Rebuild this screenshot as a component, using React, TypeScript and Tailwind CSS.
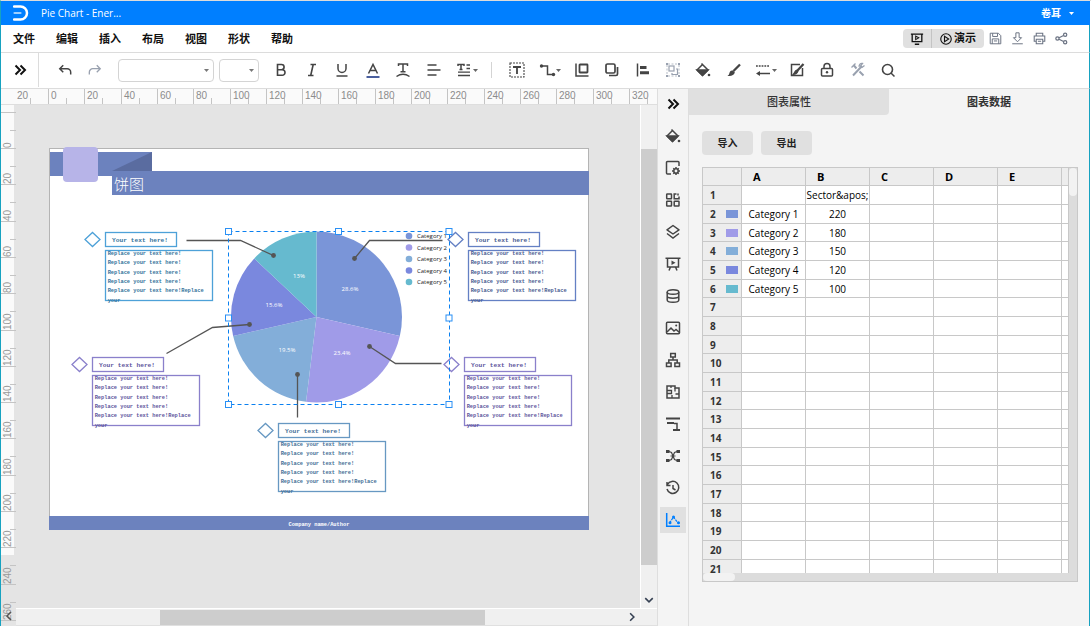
import React, { useState } from 'react';
import clsx from 'clsx';

const MENUS = ['文件', '编辑', '插入', '布局', '视图', '形状', '帮助'];

const DATA = [
  { name: 'Category 1', value: 220, color: '#7a95d8', label: '28.6%', lx: 350, ly: 291 },
  { name: 'Category 2', value: 180, color: '#a09be8', label: '23.4%', lx: 342, ly: 355 },
  { name: 'Category 3', value: 150, color: '#83aed9', label: '19.5%', lx: 287, ly: 352 },
  { name: 'Category 4', value: 120, color: '#7a88de', label: '15.6%', lx: 274, ly: 307 },
  { name: 'Category 5', value: 100, color: '#66bacf', label: '13%', lx: 299, ly: 278 },
];

const CALLOUTS = [
  { x: 105, y: 232, color: '#4da1d8', text: '#34739b' },
  { x: 468, y: 232, color: '#6480c4', text: '#485b90' },
  { x: 92, y: 357, color: '#8a80cb', text: '#5d559c' },
  { x: 464, y: 357, color: '#8a80cb', text: '#5d559c' },
  { x: 278, y: 423, color: '#6798c2', text: '#456f96' },
];

const CONNECTORS = [
  { points: '186,240 240,240 273,255', dot: [273, 255] },
  { points: '442,240 369,240 354,258', dot: [354, 258] },
  { points: '166,353 212,327 249,324', dot: [249, 324] },
  { points: '441,363 395,363 369,346', dot: [369, 346] },
  { points: '297,417 297,374', dot: [297, 374] },
];

const BODY_LINES = [
  'Replace your text here!',
  'Replace your text here!',
  'Replace your text here!',
  'Replace your text here!',
  'Replace your text here!Replace',
  'your',
];

type IconProps = { children: React.ReactNode; size?: number; width?: number; className?: string };

function Icon({ children, size = 16, width, className }: IconProps) {
  const w = width ?? size;
  return (
    <svg
      width={w}
      height={size}
      viewBox={`0 0 ${(w * 16) / size} 16`}
      fill="none"
      stroke="currentColor"
      strokeWidth={1.5}
      className={clsx('shrink-0', className)}
      aria-hidden="true"
    >
      {children}
    </svg>
  );
}

const Caret = ({ x, y }: { x: number; y: number }) => (
  <path d={`M${x} ${y}h5l-2.5 3z`} fill="#666" stroke="none" />
);

const DoubleChevron = () => (
  <Icon>
    <path d="M3.5 3.5L8 8l-4.500 4.500M8.500 3.500L13 8l-4.500 4.500" stroke="#111" strokeWidth="2" />
  </Icon>
);

const Bucket = () => (
  <Icon>
    <path d="M6.500 1.500l6.500 6.500-5.500 5.500L2 8l5-5" strokeLinejoin="round" />
    <path d="M2 8h11L7.500 13.500z" fill="currentColor" />
    <circle cx="14" cy="13" r="1.300" fill="currentColor" stroke="none" />
  </Icon>
);

type Tool = { name: string; icon: React.ReactNode; className: string };

const FORMAT_TOOLS: Tool[] = [
  { name: 'Bold', className: 'w-[30px]', icon: <Icon><path d="M4.500 2.500h4a2.500 2.500 0 010 5.200h-4zM4.500 7.700h4.700a2.800 2.800 0 010 5.600H4.500z" strokeWidth="1.600" /></Icon> },
  { name: 'Italic', className: 'w-[31px]', icon: <Icon><path d="M6.500 2.500h5.500M4 13.500h5.500M9.200 2.500l-2.500 11" strokeWidth="1.600" /></Icon> },
  { name: 'Underline', className: 'w-[30px]', icon: <Icon><path d="M4 2v4.500a4 4 0 008 0V2M2.500 14h11" /></Icon> },
  { name: 'Font color', className: 'w-[31px]', icon: <Icon><path d="M3.500 11.500l4.500-9 4.500 9M5 8.500h6" /><path d="M1.500 15h13" stroke="#4a5f9e" strokeWidth="2" /></Icon> },
  { name: 'Curved text', className: 'w-[30px]', icon: <Icon><path d="M3.500 4V2h9v2M8 2v8M5.500 9.700h5M1.500 14.500q6.500-4.500 13 0" /></Icon> },
  { name: 'Align', className: 'w-[31px]', icon: <Icon><path d="M1.500 3h9M1.500 8h13M1.500 13h9" /></Icon> },
  { name: 'Paragraph', className: 'w-9', icon: <Icon width={22}><path d="M2 4V2.500h6V4M5 2.500v5M3.500 7.500h3" /><path d="M10.500 3h3.500M10.500 6.500h3.500M2 10.200h12M2 13.500h12" strokeWidth="1.300" /><Caret x={17} y={7} /></Icon> },
];

const ARRANGE_TOOLS: Tool[] = [
  { name: 'Text box', className: 'w-[30px]', icon: <Icon><rect x="1" y="1" width="14" height="14" strokeDasharray="2 1" strokeWidth="1.100" /><path d="M4 5h8M8 5v7" strokeWidth="1.800" /></Icon> },
  { name: 'Connector', className: 'w-[35px]', icon: <Icon width={22}><path d="M3 4h5.500v8.500H15" /><circle cx="2.500" cy="4" r="1.700" fill="currentColor" stroke="none" /><circle cx="14.500" cy="12.500" r="1.700" fill="currentColor" stroke="none" /><Caret x={17} y={7} /></Icon> },
  { name: 'Align shapes', className: 'w-[30px]', icon: <Icon><path d="M2 1.500V14h12.500" /><rect x="5.500" y="2.500" width="8" height="8" rx=".5" strokeWidth="1.800" /></Icon> },
  { name: 'Bring to front', className: 'w-[30px]', icon: <Icon><rect x="2" y="2" width="9" height="9" rx="1.500" strokeWidth="1.700" /><path d="M5 13.500h7a1.500 1.500 0 001.500-1.500V5" strokeWidth="1.700" /></Icon> },
  { name: 'Distribute', className: 'w-[31px]', icon: <Icon><path d="M2.500 1.500v13" /><path d="M5 5.500h6.500M5 10.800h9" strokeWidth="3" /></Icon> },
  { name: 'Group', className: 'w-[30px] text-gray-400', icon: <Icon><path d="M3 2h10M3 14h10M2 3v10M14 3v10" strokeDasharray="2 1.500" strokeWidth=".7" /><rect x="4" y="4" width="5" height="5" strokeWidth="1.200" /><path d="M11 7h1.500v5.500H7V11" strokeWidth="1.200" /><path d="M1 2h2M13 2h2M1 14h2M13 14h2" strokeWidth="2" /></Icon> },
  { name: 'Fill', className: 'w-[30px]', icon: <Bucket /> },
  { name: 'Brush', className: 'w-[31px]', icon: <Icon><path d="M14 2.500L7.500 9" strokeWidth="2.300" /><path d="M7 8.500c-2.500-.5-3.500 1.500-3.800 3.300-.2 1-.9 1.700-1.900 2 3 .9 7-.2 7.500-3.500z" fill="currentColor" stroke="none" /></Icon> },
  { name: 'Line style', className: 'w-[33px]', icon: <Icon width={22}><path d="M1 4h14" strokeDasharray="1.800 1" /><path d="M3 11.500h12" /><path d="M1 11.500l4-2.500v5z" fill="currentColor" stroke="none" /><Caret x={17} y={7} /></Icon> },
  { name: 'Edit style', className: 'w-[30px]', icon: <Icon><path d="M11 2.500H2.500v11h11V6" /><path d="M14.500 2L8 9" strokeWidth="2.300" /><path d="M8.500 7.500c-3 0-3 3-5.500 5.500 3 .5 6-1 6.500-4z" fill="currentColor" stroke="none" /></Icon> },
  { name: 'Lock', className: 'w-[30px]', icon: <Icon><rect x="2.500" y="6.500" width="11" height="7.500" rx="1" /><path d="M5 6.500V4.500a3 3 0 016 0v2" /><circle cx="8" cy="10.300" r="1.200" fill="currentColor" stroke="none" /></Icon> },
  { name: 'Tools', className: 'w-[31px] text-gray-400', icon: <Icon><path d="M3 13.500L12 4M6.500 6.500l-3-3.500M9.500 9.500l4 4" strokeWidth="2" /><path d="M1.500 5.500l4-4M14.500 3.500l-2.500 2-1.500-1.500 2-2.500c-2-.5-3.800 1-3.300 3.300" strokeWidth="1.300" /></Icon> },
  { name: 'Search', className: 'w-[30px]', icon: <Icon><circle cx="7.500" cy="7.500" r="5" strokeWidth="1.600" /><path d="M11 11l3.500 3.500" /></Icon> },
];

const RAIL: { name: string; icon: React.ReactNode }[] = [
  { name: 'Collapse', icon: <DoubleChevron /> },
  { name: 'Fill', icon: <Bucket /> },
  { name: 'Page settings', icon: <Icon><path d="M14 6V2.500a1 1 0 00-1-1H2.500a1 1 0 00-1 1V13a1 1 0 001 1H6" /><circle cx="11" cy="11" r="2.200" /><path d="M11 7v1.500M11 13.500V15M7 11h1.500M13.500 11H15M8.300 8.300l1 1M12.700 12.700l1 1M13.700 8.300l-1 1M9.300 12.700l-1 1" /></Icon> },
  { name: 'Symbols', icon: <Icon><rect x="1.700" y="2" width="4.800" height="4.800" rx=".5" /><rect x="1.700" y="9.200" width="4.800" height="4.800" rx=".5" /><rect x="9.200" y="9.200" width="4.800" height="4.800" rx=".5" /><path d="M11.500 2H9.200v4.800H14V4.500M13 1.500v2" /></Icon> },
  { name: 'Layers', icon: <Icon><path d="M8 1.500l6 4.300-6 4.200-6-4.200z" strokeLinejoin="round" /><path d="M2 9.500l6 4.500 6-4.500" /></Icon> },
  { name: 'Slides', icon: <Icon><path d="M.5 2.200h15M2.500 2.200V11h11V2.200M5.500 11L4 14.500M10.500 11l1.500 3.500" /><path d="M6.500 4.500l4 2.200-4 2.200z" fill="currentColor" stroke="none" /></Icon> },
  { name: 'Data', icon: <Icon><ellipse cx="8" cy="4" rx="5.800" ry="2.300" /><path d="M2.200 4v8c0 1.300 2.600 2.300 5.800 2.300s5.800-1 5.800-2.300V4M2.200 8c0 1.200 2.600 2.200 5.800 2.200s5.800-1 5.800-2.200" /></Icon> },
  { name: 'Pictures', icon: <Icon><rect x="1.500" y="2.200" width="13" height="11.600" rx="1" /><path d="M2 12l4-4 3 3 2-1.500 3.500 3" /><circle cx="11.200" cy="5.500" r="1" fill="currentColor" stroke="none" /></Icon> },
  { name: 'Org chart', icon: <Icon><rect x="5.700" y="1.500" width="4.600" height="3.500" /><rect x="1.500" y="11" width="4.600" height="3.500" /><rect x="9.900" y="11" width="4.600" height="3.500" /><path d="M8 5v3M3.800 11V8h8.400v3" /></Icon> },
  { name: 'Floor plan', icon: <Icon><path d="M2 2h8v2h4v10H2z" /><path d="M6 2v2M2 6.500h4.500v3H2M10 4v3.500M7 14v-3M14 10h-3.500" strokeWidth="1.300" /></Icon> },
  { name: 'Timeline', icon: <Icon><path d="M1 2.500h14M2 7h7M8 14h7" strokeWidth="2.200" /><path d="M9 7.500h3V14" /></Icon> },
  { name: 'Mind map', icon: <Icon><path d="M4 3.500l2.500 1 3 7 2.500 1M12 3.500l-2.500 1-3 7-2.500 1M5.500 8h5" strokeWidth="1.200" /><path d="M1 3.500h3.500M11.500 3.500H15M1 12.500h3.500M11.500 12.500H15" strokeWidth="2.800" /></Icon> },
  { name: 'History', icon: <Icon><path d="M2.500 4.500A6 6 0 112 9M2 2v3.500h3.500M8 5v3.500l2.500 1.500" /></Icon> },
  { name: 'Chart', icon: <Icon><path d="M1.700 1v13.300H15" /><path d="M4.500 11L8.500 5l4.500 6" strokeWidth="1.200" strokeDasharray="2.500 1" /><path d="M8.500 5h.01M5 10.700h.01M13.500 10.700h.01" strokeWidth="3" strokeLinecap="round" /></Icon> },
];

function ToolButton({ tool }: { tool: Tool }) {
  return (
    <button aria-label={tool.name} className={clsx('flex h-6 shrink-0 items-center justify-center', tool.className)}>
      {tool.icon}
    </button>
  );
}

// 20mm is a little over 36 pixels at the current zoom
const tickAt = (origin: number, i: number) => Math.round(origin + i * 36.3);

function HorizontalRuler() {
  return (
    <svg width="655" height="16" viewBox="1 0 655 16" className="block" fontFamily="Liberation Sans, sans-serif" fontSize="10" fill="#8c8c8c">
      {Array.from({ length: 18 }, (_, i) => {
        const x = tickAt(49, i - 1);
        return (
          <g key={i}>
            {i > 0 && <path d={`M${x - 0.5} 0v15`} stroke="#c4c4c4" />}
            <path d={`M${x + 17.5} 9v6`} stroke="#c4c4c4" />
            <text x={i === 0 ? 17 : x + 2} y="10">{Math.abs(i - 1) * 20}</text>
          </g>
        );
      })}
    </svg>
  );
}

function VerticalRuler() {
  return (
    <svg width="15" height="520" viewBox="1 105 15 520" className="block" fontFamily="Liberation Sans, sans-serif" fontSize="10" fill="#999">
      <rect x="1" y="105" width="13" height="450" fill="#fafafa" />
      {Array.from({ length: 15 }, (_, i) => {
        const y = tickAt(148, i - 1);
        return (
          <g key={i}>
            <path d={`M1 ${y + 0.5}h15M10 ${y + 18.5}h6`} stroke="#c4c4c4" />
            {i > 0 && (
              <text transform={`translate(11 ${y}) rotate(-90)`}>{(i - 1) * 20}</text>
            )}
          </g>
        );
      })}
      <path d="M11 612l-4 4 4 4" fill="none" stroke="#555" strokeWidth="1.500" />
    </svg>
  );
}

function Pie({ cx, cy, r }: { cx: number; cy: number; r: number }) {
  const total = DATA.reduce((sum, d) => sum + d.value, 0);
  const point = (v: number) => {
    const a = (v / total) * Math.PI * 2;
    return `${cx + r * Math.sin(a)} ${cy - r * Math.cos(a)}`;
  };
  let start = 0;
  return (
    <g>
      {DATA.map((d) => {
        const from = start;
        start += d.value;
        return <path key={d.name} d={`M${cx} ${cy}L${point(from)}A${r} ${r} 0 0 1 ${point(start)}Z`} fill={d.color} />;
      })}
    </g>
  );
}

function Callout({ x, y, color, text }: { x: number; y: number; color: string; text: string }) {
  return (
    <g>
      <g fill="none" stroke={color} strokeWidth="1.300">
        <path d={`M${x - 20} ${y + 7.5}l7.500-7 7.500 7-7.500 7z`} />
        <rect x={x + 0.5} y={y + 0.5} width="71" height="14" />
        <rect x={x + 0.5} y={y + 18.5} width="107" height="50" />
      </g>
      <svg x={x} y={y} width="128" height="72" viewBox="0 0 144 81" overflow="visible" fontFamily="Liberation Mono, monospace" fontWeight="bold" fill={text}>
        <text x="8" y="11" fontSize="7">Your text here!</text>
        <g fontSize="6">
          {BODY_LINES.map((line, i) => (
            <text key={i} x="3" y={26 + i * 10.5}>{line}</text>
          ))}
        </g>
      </svg>
    </g>
  );
}

function Drawing() {
  return (
    <svg width="624" height="503" viewBox="16 105 624 503" className="block shrink-0">
      <rect x="49.500" y="148.500" width="539" height="381" fill="#fff" stroke="#b4b4b4" />
      <rect x="50" y="152" width="102" height="24" fill="#6c82be" />
      <path d="M112 171l40-19v19z" fill="#5a6ca0" />
      <rect x="112" y="171" width="477" height="24" fill="#6c82be" />
      <rect x="63" y="147" width="35" height="35" rx="4" fill="#b7b4e8" />
      <text x="114" y="190" fontSize="15" fill="#fff" fontFamily="Noto Sans CJK SC, sans-serif" fontWeight="300">饼图</text>
      <rect x="49" y="516" width="540" height="14" fill="#6c82be" />
      <svg x="279" y="516" width="80" height="16" viewBox="0 0 90 18" fontFamily="Liberation Mono, monospace" fontWeight="bold" fontSize="6" fill="#fff">
        <text x="45" y="11" textAnchor="middle">Company name/Author</text>
      </svg>

      <Pie cx={316.5} cy={317} r={85.5} />
      <g fontFamily="Open Sans, Noto Sans, sans-serif" fontSize="6">
        {DATA.map((d, i) => (
          <g key={d.name}>
            <text x={d.lx} y={d.ly} textAnchor="middle" fill="#fff">{d.label}</text>
            <circle cx="409" cy={236 + i * 11.5} r="3.300" fill={d.color} />
            <text x="417" y={238 + i * 11.5} fill="#222">{d.name}</text>
          </g>
        ))}
      </g>
      {CONNECTORS.map((c) => (
        <g key={c.points} transform="translate(.5 .5)">
          <polyline points={c.points} fill="none" stroke="#555" strokeWidth="1.300" />
          <circle cx={c.dot[0]} cy={c.dot[1]} r="2.400" fill="#555" />
        </g>
      ))}
      {CALLOUTS.map((c) => (
        <Callout key={`${c.x}-${c.y}`} {...c} />
      ))}

      {/* selection frame */}
      <rect x="228.500" y="231.500" width="221" height="173" fill="none" stroke="#0a80f0" strokeDasharray="4 3" />
      {[228.5, 338.5, 449].map((x) =>
        [231.5, 318, 404.5].map((y) =>
          x === 338.5 && y === 318 ? null : (
            <rect key={`${x}-${y}`} x={x - 3} y={y - 3} width="6" height="6" fill="#fff" stroke="#2a90f5" />
          )
        )
      )}
    </svg>
  );
}

function Workspace() {
  return (
    <main className="flex min-w-0 flex-1 flex-col overflow-hidden">
      <div className="h-4 shrink-0 overflow-hidden border-b border-[#dedede] bg-[#fafafa]">
        <HorizontalRuler />
      </div>
      <div className="flex min-h-0 flex-1">
        <div className="w-[15px] shrink-0 overflow-hidden bg-[#e4e4e4]">
          <VerticalRuler />
        </div>
        <div className="flex min-w-0 flex-1 flex-col">
          <div className="flex min-h-0 flex-1">
            <div className="min-w-0 flex-1 overflow-hidden bg-[#e4e4e4]">
              <Drawing />
            </div>
            <div className="flex w-[17px] shrink-0 flex-col items-center border-l border-white bg-[#f0f0f0] pt-11">
              <div className="h-[416px] w-full bg-[#cdcdcd]" />
              <Icon size={10} className="mt-[30px] text-gray-700"><path d="M2 5l6 6 6-6" strokeWidth="2.500" /></Icon>
            </div>
          </div>
          <div className="flex h-[18px] shrink-0 items-center justify-between border-y border-b-[#e0e0e0] border-t-white bg-[#f0f0f0] pr-5">
            <div className="ml-36 h-[15px] w-[325px] bg-[#cdcdcd]" />
            <Icon size={10} className="text-gray-700"><path d="M5 2l6 6-6 6" strokeWidth="2.500" /></Icon>
          </div>
        </div>
      </div>
    </main>
  );
}

function DataSheet() {
  return (
    <div className="mt-3 flex w-[376px] border border-[#c8c8c8] bg-[#dcdcdc]">
      <div className="min-w-0 flex-1">
        <div className="h-[405px] overflow-hidden border-r border-[#c8c8c8] bg-white">
          <table className="w-[370px] table-fixed border-separate border-spacing-0 text-[10px] leading-4 text-black">
            <thead>
              <tr className="h-[18px] bg-[#ededed] text-left text-[11px] leading-4">
                <th className="w-[39px] border-b border-r border-[#c8c8c8] p-0" />
                {['A', 'B', 'C', 'D', 'E'].map((c) => (
                  <th key={c} className="w-16 border-b border-r border-[#c8c8c8] p-0 pl-[11px] font-bold">{c}</th>
                ))}
                <th className="border-b border-[#c8c8c8] p-0" />
              </tr>
            </thead>
            <tbody>
              {Array.from({ length: 21 }, (_, i) => {
                const item = i > 0 ? DATA[i - 1] : undefined;
                return (
                  <tr key={i} className={i % 3 === 2 ? 'h-[18px]' : 'h-[19px]'}>
                    <th className="border-b border-r border-[#c8c8c8] bg-[#ededed] p-0 font-bold text-[#333]">
                      <div className="flex items-center justify-between pl-[7px] pr-[3px]">
                        {i + 1}
                        {item && <span className="h-2 w-3" style={{ backgroundColor: item.color }} />}
                      </div>
                    </th>
                    <td className="border-b border-r border-[#c8c8c8] p-0 text-center">{item?.name}</td>
                    <td className="border-b border-r border-[#c8c8c8] p-0 text-center">
                      {i === 0 ? 'Sector&apos;' : item?.value}
                    </td>
                    <td className="border-b border-r border-[#c8c8c8] p-0" />
                    <td className="border-b border-r border-[#c8c8c8] p-0" />
                    <td className="border-b border-r border-[#c8c8c8] p-0" />
                    <td className="border-b border-[#c8c8c8] p-0" />
                  </tr>
                );
              })}
            </tbody>
          </table>
        </div>
        <div className="h-2">
          <div className="h-2 w-8 rounded-full bg-[#f2f2f2]" />
        </div>
      </div>
      <div className="w-2 shrink-0">
        <div className="h-7 w-2 rounded-full bg-[#f2f2f2]" />
      </div>
    </div>
  );
}

export default function App() {
  const [tab, setTab] = useState('图表数据');

  return (
    <div className="flex h-screen flex-col overflow-hidden border-l border-t border-l-[#17a2c0] border-t-[#dcdcdc] bg-white pr-px font-['Open_Sans','Noto_Sans_CJK_SC',sans-serif] text-[#444]">
      <header className="flex h-6 shrink-0 items-center bg-[#007fff] text-[10px] text-white">
        <svg width="16" height="16" viewBox="0 0 16 16" fill="none" className="ml-3 shrink-0" aria-hidden="true">
          <path d="M1 1.500h6.500a6.500 6.500 0 010 13H1" stroke="#fff" strokeWidth="2.500" strokeLinecap="round" />
          <path d="M1.500 8h6" stroke="#9fd0ff" strokeWidth="2.200" strokeLinecap="round" />
        </svg>
        <h1 className="ml-3">Pie Chart - Ener...</h1>
        <button className="ml-auto mr-4 flex items-center gap-2 font-bold">
          卷耳
          <svg width="5" height="3" viewBox="0 0 5 3" aria-hidden="true"><path d="M0 0h5L2.500 3z" fill="#fff" /></svg>
        </button>
      </header>

      <nav className="flex h-7 shrink-0 items-center border-b border-r border-b-[#dcdcdc] border-r-[#17a2c0] pl-3 text-[#111]">
        <div className="flex gap-[21px] pt-0.5 text-[11px] font-bold">
          {MENUS.map((m) => (
            <button key={m}>{m}</button>
          ))}
        </div>
        <div className="ml-auto flex h-[19px] items-center overflow-hidden rounded-sm bg-[#e0e0e0]">
          <button aria-label="Slide show" className="flex h-full w-[29px] items-center justify-center border-r border-[#c4c4c4]">
            <Icon size={14}><path d="M1 2.500h14M2.500 2.500v8.500h11V2.500M5.500 14h5" /><path d="M6.500 4.700v4l3.500-2z" strokeWidth="1.200" /></Icon>
          </button>
          <button className="flex h-full w-[52px] items-center justify-center gap-0.5 text-[11px] font-bold">
            <Icon size={12}><circle cx="8" cy="8" r="7" /><path d="M6 4.500v7L11.500 8z" /></Icon>
            演示
          </button>
        </div>
        <div className="mr-[17px] flex text-gray-500">
          <button aria-label="Save" className="flex w-[22px] justify-center"><Icon size={13}><path d="M1.500 1.500h10l3 3v10h-13zM4.500 1.500v4h6v-4M4 14.500v-6h8v6M6 11h4" strokeWidth="1.200" /></Icon></button>
          <button aria-label="Download" className="flex w-[22px] justify-center"><Icon size={13}><path d="M6 1h4v6h3l-5 5-5-5h3zM1.500 14.500h13" strokeWidth="1.200" /></Icon></button>
          <button aria-label="Print" className="flex w-[22px] justify-center"><Icon size={13}><path d="M4 5V1.500h8V5M4 11.500H1.500V5h13v6.500H12M4 9h8v5.500H4zM6 11.500h4" strokeWidth="1.300" /></Icon></button>
          <button aria-label="Share" className="flex w-[22px] justify-center"><Icon size={13}><circle cx="3" cy="8" r="2" /><circle cx="12.500" cy="3.500" r="2" /><circle cx="12.500" cy="12.500" r="2" /><path d="M5 7l5.500-2.700M5 9l5.500 2.700" /></Icon></button>
        </div>
      </nav>

      <div className="flex h-9 shrink-0 items-center border-b border-r border-b-[#dcdcdc] border-r-[#17a2c0] pb-px">
        <button aria-label="Expand" className="flex w-[38px] items-center justify-center self-stretch border-r border-[#dcdcdc]">
          <DoubleChevron />
        </button>
        <div className="ml-[11px] flex">
          <button aria-label="Undo" className="flex w-[30px] justify-center"><Icon size={14}><path d="M6 2.500L2 6.500l4 4M2.500 6.500h8a4 4 0 014 4V13" strokeWidth="1.700" /></Icon></button>
          <button aria-label="Redo" className="flex w-[30px] justify-center text-gray-400"><Icon size={14}><path d="M10 2.500l4 4-4 4M13.500 6.500h-8a4 4 0 00-4 4V13" strokeWidth="1.500" /></Icon></button>
        </div>
        <button aria-label="Font" className="ml-2 flex h-[23px] w-24 items-center justify-end rounded-sm border border-[#d4d4d4] pr-1">
          <svg width="5" height="3" viewBox="0 0 5 3" aria-hidden="true"><path d="M0 0h5L2.500 3z" fill="#777" /></svg>
        </button>
        <button aria-label="Font size" className="ml-[5px] flex h-[23px] w-10 items-center justify-end rounded-sm border border-[#d4d4d4] pr-1">
          <svg width="5" height="3" viewBox="0 0 5 3" aria-hidden="true"><path d="M0 0h5L2.500 3z" fill="#777" /></svg>
        </button>
        <div className="ml-[7px] flex">
          {FORMAT_TOOLS.map((t) => <ToolButton key={t.name} tool={t} />)}
        </div>
        <div className="ml-1.5 h-4 w-px bg-[#d4d4d4]" />
        <div className="ml-2.5 flex">
          {ARRANGE_TOOLS.map((t) => <ToolButton key={t.name} tool={t} />)}
        </div>
      </div>

      <div className="flex min-h-0 flex-1 border-r border-[#17a2c0]">
        <Workspace />

        <aside className="flex w-8 shrink-0 flex-col items-center gap-1.5 border-x border-[#dedede] bg-[#f4f4f4] pt-0.5">
          {RAIL.map((r) => (
            <button
              key={r.name}
              aria-label={r.name}
              className={clsx('flex size-[26px] shrink-0 items-center justify-center', r.name === 'Chart' && 'bg-[#e0e0e0] text-[#007fff]')}
            >
              {r.icon}
            </button>
          ))}
        </aside>

        <section className="w-[400px] shrink-0 bg-[#f4f4f4]">
          <div className="flex h-[26px] text-[11px] text-[#333]">
            {['图表属性', '图表数据'].map((t) => (
              <button
                key={t}
                onClick={() => setTab(t)}
                className={clsx('flex-1', t === tab ? 'font-bold' : 'rounded-br-sm bg-[#e0e0e0] font-medium')}
              >
                {t}
              </button>
            ))}
          </div>
          <div className="pl-[13px] pt-4">
            <div className="flex gap-2 text-[10px] font-bold text-[#222]">
              <button className="h-6 w-[51px] rounded-sm bg-[#e0e0e0]">导入</button>
              <button className="h-6 w-[51px] rounded-sm bg-[#e0e0e0]">导出</button>
            </div>
            <DataSheet />
          </div>
        </section>
      </div>
    </div>
  );
}
